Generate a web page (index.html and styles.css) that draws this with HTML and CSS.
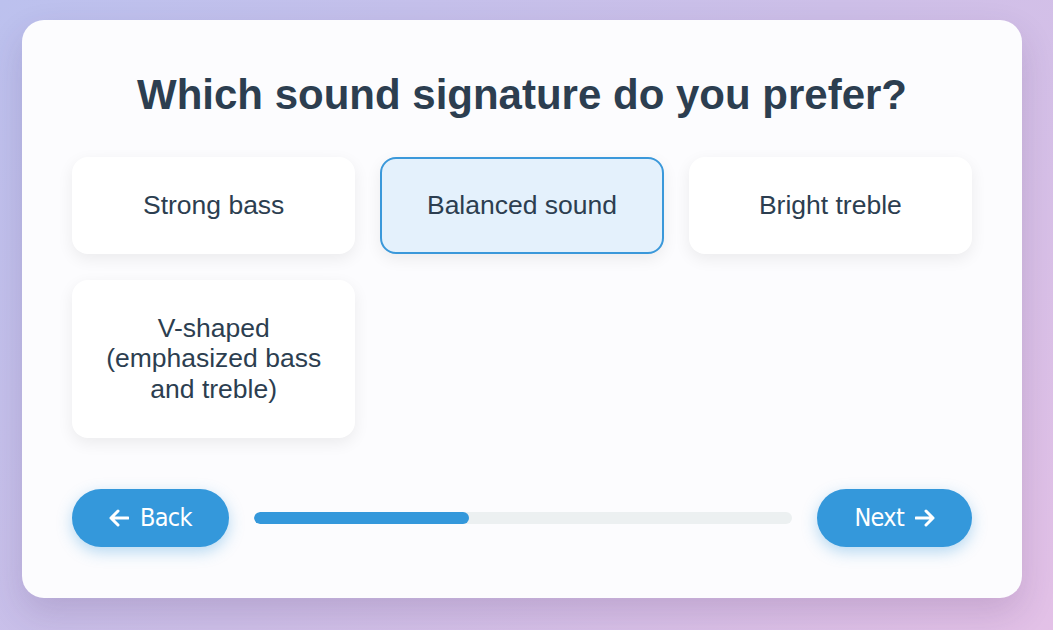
FILE: index.html
```html
<!DOCTYPE html>
<html lang="en">
<head>
<meta charset="utf-8">
<title>Sound signature quiz</title>
<link rel="stylesheet" href="styles.css">
</head>
<body>
<main class="card">
  <h1 class="question">Which sound signature do you prefer?</h1>
  <div class="options">
    <button class="option">Strong bass</button>
    <button class="option selected">Balanced sound</button>
    <button class="option">Bright treble</button>
    <button class="option">V-shaped<br>(emphasized bass<br>and treble)</button>
  </div>
  <div class="nav">
    <button class="nav-btn">
      <svg class="arrow" viewBox="0 0 20 18" width="20" height="18"><path d="M19 9H2M9 2L2 9l7 7" fill="none" stroke="#fff" stroke-width="3" stroke-linecap="round" stroke-linejoin="round"/></svg>
      <span>Back</span>
    </button>
    <div class="progress"><div class="progress-fill" style="width:40%"></div></div>
    <button class="nav-btn">
      <span>Next</span>
      <svg class="arrow" viewBox="0 0 20 18" width="20" height="18"><path d="M1 9h17M11 2l7 7-7 7" fill="none" stroke="#fff" stroke-width="3" stroke-linecap="round" stroke-linejoin="round"/></svg>
    </button>
  </div>
</main>
</body>
</html>
```
FILE: styles.css
```css
html, body {
  height: 100%;
}
body {
  margin: 0;
  padding: 20px 22px;
  box-sizing: border-box;
  background: linear-gradient(135deg, #bcc1ee 0%, #cdbfe8 50%, #e3c1e7 100%);
  font-family: "Liberation Sans", Arial, sans-serif;
}
.card {
  width: 1000px;
  box-sizing: border-box;
  padding: 50px 50px 51px;
  background: #fcfcfe;
  border-radius: 22px;
  box-shadow: 0 15px 35px rgba(60, 30, 90, 0.16);
}
.question {
  margin: 0 0 38px;
  text-align: center;
  font-size: 42px;
  font-weight: bold;
  color: #2c3e50;
  line-height: 49px;
}
.options {
  display: grid;
  grid-template-columns: repeat(3, 1fr);
  gap: 26px 25px;
}
.option {
  font-family: "Liberation Sans", Arial, sans-serif;
  font-size: 26.5px;
  line-height: 30.7px;
  color: #2c3e50;
  background: #fff;
  border: 2px solid transparent;
  border-radius: 16px;
  padding: 31px 20px;
  box-shadow: 0 5px 16px rgba(0, 0, 0, 0.07);
  text-align: center;
  cursor: pointer;
}
.option.selected {
  background: #e4f1fc;
  border-color: #3a98da;
}
.nav {
  display: flex;
  align-items: center;
  gap: 25px;
  margin-top: 51px;
}
.nav-btn {
  display: flex;
  align-items: center;
  gap: 11px;
  height: 58px;
  padding: 0 37px;
  border: none;
  border-radius: 29px;
  background: #3498db;
  color: #fff;
  font-family: "DejaVu Sans Condensed", "DejaVu Sans", sans-serif;
  font-size: 25px;
  letter-spacing: -0.7px;
  box-shadow: 0 5px 15px rgba(52, 152, 219, 0.35);
  cursor: pointer;
}
.arrow {
  display: block;
}
.progress {
  flex: 1;
  height: 12px;
  background: #ecf0f1;
  border-radius: 6px;
  overflow: hidden;
}
.progress-fill {
  height: 100%;
  background: #3498db;
  border-radius: 6px;
}
```
